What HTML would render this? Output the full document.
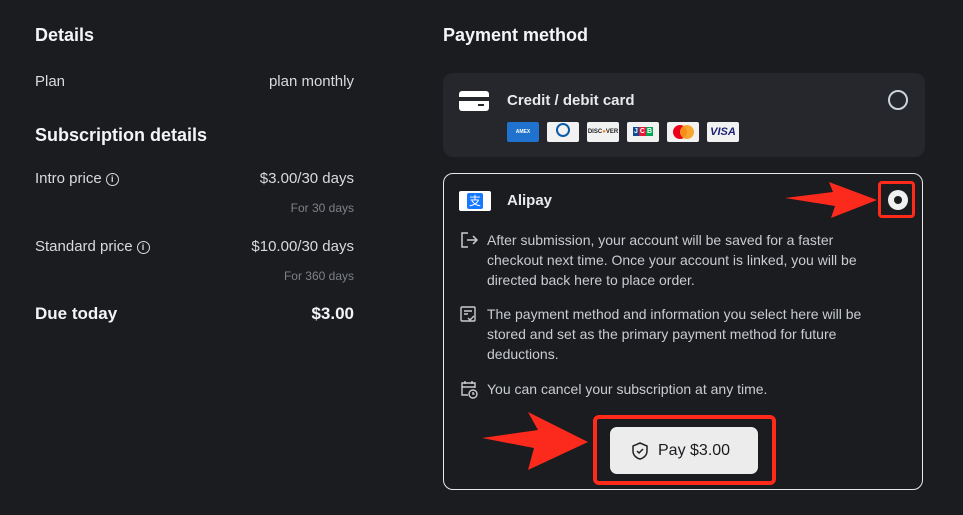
<!DOCTYPE html>
<html><head><style>
body{margin:0;width:963px;height:515px;background:#1b1c1f;font-family:"Liberation Sans",sans-serif;color:#e8e9eb;position:relative;overflow:hidden}
.a{position:absolute;white-space:nowrap}
h{font-weight:bold;font-size:18px;color:#f3f4f6}
.r{font-size:15px;color:#d9dadd}
.s{font-size:12px;color:#7d8087}
.i{display:inline-block;width:11px;height:11px;border:1.3px solid #d9dadd;border-radius:50%;font-size:9px;text-align:center;line-height:11px;vertical-align:1px;margin-left:4px;font-weight:bold}
.t{font-size:14px;color:#c9ccd1;line-height:20px;white-space:normal;width:400px}
.logo{position:absolute;top:122px;width:32px;height:20px;border-radius:2px;background:#f2f2f2;font-size:7px;font-weight:bold;text-align:center;line-height:20px}
</style></head><body>
<div class="a" style="left:35px;top:25px"><h>Details</h></div>
<div class="a r" style="left:35px;top:73px">Plan</div>
<div class="a r" style="right:609px;top:73px">plan monthly</div>
<div class="a" style="left:35px;top:125px"><h>Subscription details</h></div>
<div class="a r" style="left:35px;top:170px">Intro price<span class="i">i</span></div>
<div class="a r" style="right:609px;top:170px">$3.00/30 days</div>
<div class="a s" style="right:609px;top:201px">For 30 days</div>
<div class="a r" style="left:35px;top:238px">Standard price<span class="i">i</span></div>
<div class="a r" style="right:609px;top:238px">$10.00/30 days</div>
<div class="a s" style="right:609px;top:269px">For 360 days</div>
<div class="a" style="left:35px;top:304px;font-size:17px;font-weight:bold;color:#f3f4f6">Due today</div>
<div class="a" style="right:609px;top:304px;font-size:17px;font-weight:bold;color:#f3f4f6">$3.00</div>

<div class="a" style="left:443px;top:25px"><h>Payment method</h></div>
<div class="a" style="left:443px;top:73px;width:482px;height:84px;background:#25272c;border-radius:10px"></div>
<div class="a" style="left:459px;top:91px;width:30px;height:20px;border-radius:3px;background:#fff"><div style="position:absolute;left:0;right:0;top:6px;height:4px;background:#25272c"></div><div style="position:absolute;right:5px;top:13px;width:6px;height:2px;background:#25272c"></div></div>
<div class="a" style="left:507px;top:92px;font-size:15px;font-weight:bold">Credit / debit card</div>
<div class="a" style="left:888px;top:90px;width:16px;height:16px;border:2px solid #c9d3d9;border-radius:50%"></div>
<div class="logo" style="left:507px;background:#1f72cd;color:#fff;font-size:5px">AMEX</div>
<div class="logo" style="left:547px"><span style="display:inline-block;width:14px;height:14px;border:2px solid #0a5aa8;border-radius:50%;margin-top:1px;box-sizing:border-box"></span></div>
<div class="logo" style="left:587px;color:#222;font-size:6px">DISC<span style="color:#f58220">●</span>VER</div>
<div class="logo" style="left:627px;color:#fff"><span style="background:#0e4c96;padding:1px">J</span><span style="background:#e21836;padding:1px">C</span><span style="background:#00a650;padding:1px">B</span></div>
<div class="logo" style="left:667px"><span style="position:absolute;left:6px;top:3px;width:14px;height:14px;border-radius:50%;background:#eb001b"></span><span style="position:absolute;left:13px;top:3px;width:14px;height:14px;border-radius:50%;background:#f79e1b;opacity:.9"></span></div>
<div class="logo" style="left:707px;color:#1a1f71;font-size:11px;font-style:italic">VISA</div>

<div class="a" style="left:443px;top:173px;width:478px;height:315px;border:1.5px solid #e8e9eb;border-radius:10px"></div>
<div class="a" style="left:459px;top:191px;width:32px;height:20px;background:#fff;border-radius:2px"><div style="margin:2px 8px;width:16px;height:16px;background:#1677ff;border-radius:2px;color:#fff;font-size:12px;text-align:center;line-height:16px;font-family:'Noto Sans CJK SC',sans-serif">支</div></div>
<div class="a" style="left:507px;top:192px;font-size:15px;font-weight:bold">Alipay</div>
<div class="a" style="left:878px;top:181px;width:37px;height:37px;border:3px solid #ff2a1a;border-radius:4px;box-sizing:border-box"></div>
<div class="a" style="left:888px;top:190px;width:20px;height:20px;background:#f0f0f0;border-radius:50%"><div style="margin:6px;width:8px;height:8px;border-radius:50%;background:#1b1c1f"></div></div>
<svg class="a" style="left:783px;top:176px" width="96" height="44"><polygon points="2,22 50,16 46,6 94,24 48,42 52,30" fill="#fc2a1c"/></svg>

<svg class="a" style="left:459px;top:230px" width="20" height="20" fill="none" stroke="#c9ccd1" stroke-width="1.5"><path d="M9 3H3v14h6M8 10h10M14 6l4 4-4 4"/></svg>
<div class="a t" style="left:487px;top:230px">After submission, your account will be saved for a faster checkout next time. Once your account is linked, you will be directed back here to place order.</div>
<svg class="a" style="left:459px;top:304px" width="20" height="20" fill="none" stroke="#c9ccd1" stroke-width="1.4"><rect x="2" y="3" width="14" height="14" rx="1"/><path d="M5 7h8M5 10h4M9 14l2 2 4-4"/></svg>
<div class="a t" style="left:487px;top:304px">The payment method and information you select here will be stored and set as the primary payment method for future deductions.</div>
<svg class="a" style="left:459px;top:379px" width="20" height="20" fill="none" stroke="#c9ccd1" stroke-width="1.4"><path d="M9 16H3V4h13v5M3 8h13M6 2v3M13 2v3"/><circle cx="14" cy="15" r="4"/><path d="M14 13v2h1.5"/></svg>
<div class="a t" style="left:487px;top:379px">You can cancel your subscription at any time.</div>

<svg class="a" style="left:480px;top:410px" width="110" height="60"><polygon points="2,28 58,20 48,2 108,32 48,60 54,38" fill="#fc2a1c"/></svg>
<div class="a" style="left:593px;top:415px;width:183px;height:70px;border:4px solid #ff2a1a;border-radius:6px;box-sizing:border-box"></div>
<div class="a" style="left:610px;top:427px;width:148px;height:47px;background:#ececec;border-radius:7px"></div>
<svg class="a" style="left:631px;top:441px" width="18" height="20" fill="none" stroke="#222" stroke-width="1.5"><path d="M9 2l7 3v5c0 4-3 7-7 8-4-1-7-4-7-8V5z"/><path d="M6 10l2 2 4-4"/></svg>
<div class="a" style="left:658px;top:442px;font-size:16px;color:#1b1c1f">Pay $3.00</div>
</body></html>
